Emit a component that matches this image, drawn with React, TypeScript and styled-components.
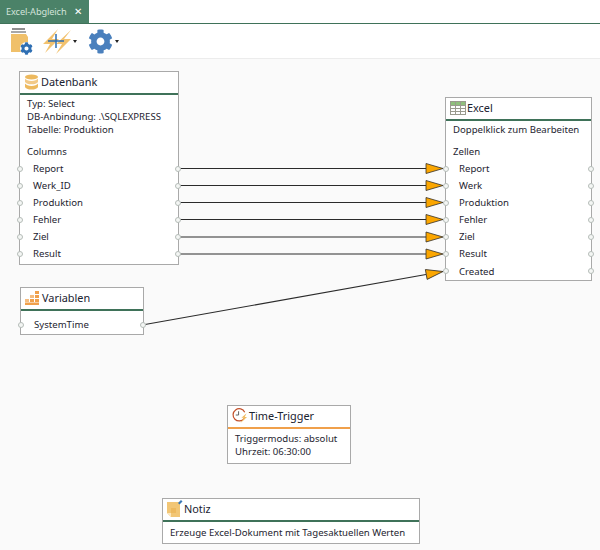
import React from "react";
import styled, { createGlobalStyle } from "styled-components";
import { FaCog } from "react-icons/fa";

const Global = createGlobalStyle`
  html, body { margin: 0; padding: 0; background: #fff; }
  body { font-family: "Noto Sans", "DejaVu Sans", sans-serif; color: #1e2430; }
`;

const Page = styled.div`
  width: 600px;
  height: 550px;
  overflow: hidden;
  display: flex;
  flex-direction: column;
`;

const TabBar = styled.div`
  height: 24px;
  flex: none;
  box-sizing: border-box;
  display: flex;
  border-bottom: 1px solid #3f7259;
`;

const Tab = styled.div`
  width: 89px;
  display: flex;
  align-items: center;
  justify-content: space-between;
  padding: 0 6px;
  box-sizing: border-box;
  background: #4b8268;
  color: #d3e2da;
  font-size: 9.2px;
  letter-spacing: -0.1px;
`;

const Close = styled.span`
  color: #fff;
  font-size: 10px;
  font-family: "Liberation Sans", sans-serif;
  margin-right: 1px;
`;

const Toolbar = styled.div`
  height: 35px;
  flex: none;
  display: flex;
  align-items: center;
  gap: 11px;
  padding: 0 0 0 10px;
  border-bottom: 1px solid #ececec;
  box-sizing: border-box;
`;

const ToolButton = styled.div`
  display: flex;
  align-items: center;
  gap: 2px;
`;

const Caret = styled.span`
  width: 0;
  height: 0;
  border-left: 2.5px solid transparent;
  border-right: 2.5px solid transparent;
  border-top: 3px solid #222;
`;

const Canvas = styled.div`
  position: relative;
  flex: 1;
  background: #fafafa;
`;

const Wires = styled.svg`
  position: absolute;
  left: 0;
  top: 0;
  z-index: 1;
`;

const Node = styled.div<{ $x: number; $y: number; $w: number; $h: number }>`
  position: absolute;
  left: ${(p) => p.$x}px;
  top: ${(p) => p.$y}px;
  width: ${(p) => p.$w}px;
  height: ${(p) => p.$h}px;
  box-sizing: border-box;
  background: #fff;
  border: 1px solid #a9a9a9;
  font-size: 9.6px;
  line-height: 13px;
`;

const NodeHead = styled.div<{ $accent?: string }>`
  height: 23px;
  box-sizing: border-box;
  display: flex;
  align-items: center;
  gap: 1px;
  padding: 0 0 2px 4px;
  font-size: 10.9px;
  color: #1a2230;
  border-bottom: 2px solid ${(p) => p.$accent || "#3f7259"};
`;

const IconSlot = styled.span`
  width: 16px;
  height: 17px;
  flex: none;
  display: flex;
  align-items: center;
`;

const NodeBody = styled.div<{ $top?: number }>`
  padding: ${(p) => p.$top ?? 2}px 0 0 7px;
`;

const Gap = styled.div`
  height: 9px;
`;

const PortList = styled.div<{ $w: number; $top?: number }>`
  position: relative;
  width: ${(p) => p.$w}px;
  margin-top: ${(p) => p.$top ?? 0}px;
`;

const PortRow = styled.div`
  position: relative;
  height: 17.1px;
  line-height: 17px;
  padding-left: 6px;
`;

const PortDot = styled.span<{ $side: "left" | "right" }>`
  position: absolute;
  z-index: 2;
  top: 5.5px;
  ${(p) => (p.$side === "left" ? "left: -10.5px;" : "right: -4px;")}
  width: 4px;
  height: 4px;
  border-radius: 50%;
  background: #f4f6f4;
  border: 1px solid #b5bcb8;
`;

const Ports = ({ names, w, top }: { names: string[]; w: number; top?: number }) => (
  <PortList $w={w} $top={top}>
    {names.map((n) => (
      <PortRow key={n}>
        <PortDot $side="left" />
        {n}
        <PortDot $side="right" />
      </PortRow>
    ))}
  </PortList>
);

const DbIcon = () => (
  <svg width="15" height="16" viewBox="0 0 15 16">
    <ellipse cx="7.5" cy="3" rx="6.5" ry="2.6" fill="#edb95e" />
    <path d="M1 4.6c1 1.7 3.5 2.4 6.5 2.4s5.5-.7 6.5-2.4V8c-1 1.6-3.5 2.3-6.5 2.3S2 9.6 1 8z" fill="#f2c987" />
    <path d="M1 9.6c1 1.6 3.5 2.3 6.5 2.3s5.5-.7 6.5-2.3V13c-.4 1.5-3 2.6-6.5 2.6S1.4 14.5 1 13z" fill="#edb95e" />
  </svg>
);

const GridIcon = () => (
  <svg width="16" height="14" viewBox="0 0 16 14">
    <rect x="0.5" y="0.5" width="15" height="13" fill="#fff" stroke="#9a9a8e" />
    <rect x="1" y="1" width="14" height="3" fill="#8fc07c" />
    <path d="M5.5 1v12M10.5 1v12M1 4.500h14M1 7.500h14M1 10.500h14" stroke="#9a9a8e" fill="none" />
  </svg>
);

const BarsIcon = () => (
  <svg width="15" height="14" viewBox="0 0 15 14" fill="#f0a04b">
    <rect x="10" y="0" width="4" height="3" />
    <rect x="10" y="4" width="4" height="3" />
    <rect x="5" y="4" width="4" height="3" fill="#f5bd80" />
    <rect x="5" y="8" width="4" height="3" />
    <rect x="10" y="8" width="4" height="3" />
    <rect x="0" y="8" width="4" height="3" fill="#f5bd80" />
    <rect x="0" y="11.5" width="14" height="2.500" />
  </svg>
);

const TimerIcon = () => (
  <svg width="17" height="17" viewBox="0 0 17 17">
    <path d="M13 11.500A6.500 6.500 0 1 1 13.500 5" fill="none" stroke="#c4512b" strokeWidth="1.300" />
    <path d="M7 4v4H4" fill="none" stroke="#5b5b5b" strokeWidth="1" />
    <path d="M15.500 6 10 11h2.500L9 16.500l7-6.500h-2.500z" fill="#f1bb5f" />
  </svg>
);

const NoteIcon = () => (
  <svg width="16" height="17" viewBox="0 0 16 17">
    <path d="M0 2h13v15H4l-4-4z" fill="#f2c675" />
    <path d="M0 13h4v4z" fill="#fbe7bf" />
    <path d="M4 8h5v5H4z" fill="#edb95e" />
    <path d="M11 3l3-3 1.500 1.500-3 3z" fill="#3a78b5" />
  </svg>
);

const DbStack = styled.span`
  position: relative;
  display: block;
  width: 22px;
  height: 27px;
`;

const SmallGear = styled(FaCog)`
  position: absolute;
  right: -1px;
  bottom: 0;
  color: #2f6fb3;
  background: #fff;
  border-radius: 50%;
`;

const DbGearIcon = () => (
  <DbStack>
    <svg width="18" height="25" viewBox="0 0 18 25">
      <rect x="2" y="0" width="13" height="2" fill="#8f8f8f" />
      <rect x="1" y="3" width="15" height="2" fill="#a8a8a8" />
      <path d="M1 6h15l2 3v15H1z" fill="#f0c06a" />
    </svg>
    <SmallGear size={13} />
  </DbStack>
);

const BoltPlusIcon = () => (
  <svg width="28" height="27" viewBox="0 0 28 27">
    <path d="M15 1 0 16h7L2 25 16 11H9z" fill="#f2c26f" />
    <path d="M28 2 13 16h6l-6 10 15-15h-7z" fill="#f2c26f" />
    <path d="M13 6v14M5 13h16" stroke="#2f6fb3" strokeWidth="1.500" fill="none" />
  </svg>
);

// connectors, canvas coordinates: left node port to right node port
const links = [
  [179, 109.5, 443, 109.5],
  [179, 126.5, 443, 126.5],
  [179, 143.5, 443, 143.5],
  [179, 160.5, 443, 160.5],
  [179, 178, 443, 178],
  [179, 195, 443, 195],
  [145, 265.5, 443, 212.5],
];

const Arrow = ({ x1, y1, x2, y2 }: { x1: number; y1: number; x2: number; y2: number }) => {
  const deg = (Math.atan2(y2 - y1, x2 - x1) * 180) / Math.PI;
  return (
    <g>
      <line x1={x1} y1={y1} x2={x2 - 17} y2={y2 + (y1 - y2) * (17 / (x2 - x1))} stroke="#2b2b2b" strokeWidth="1.1" />
      <path
        d="M0 0 L-17 -5 L-17 5 Z"
        transform={`translate(${x2} ${y2}) rotate(${deg})`}
        fill="#fba600"
        stroke="#33302a"
        strokeWidth="0.8"
      />
    </g>
  );
};

const dbCols = ["Report", "Werk_ID", "Produktion", "Fehler", "Ziel", "Result"];
const xlCols = ["Report", "Werk", "Produktion", "Fehler", "Ziel", "Result", "Created"];

export default function App() {
  return (
    <Page>
      <Global />
      <TabBar>
        <Tab>
          Excel-Abgleich
          <Close>✕</Close>
        </Tab>
      </TabBar>
      <Toolbar>
        <ToolButton>
          <DbGearIcon />
        </ToolButton>
        <ToolButton>
          <BoltPlusIcon />
          <Caret />
        </ToolButton>
        <ToolButton>
          <FaCog size={25} color="#4a80bd" />
          <Caret />
        </ToolButton>
      </Toolbar>
      <Canvas>
        <Node $x={19} $y={12} $w={160} $h={194}>
          <NodeHead>
            <IconSlot>
              <DbIcon />
            </IconSlot>
            Datenbank
          </NodeHead>
          <NodeBody>
            Typ: Select
            <br />
            DB-Anbindung: .\SQLEXPRESS
            <br />
            Tabelle: Produktion
            <Gap />
            Columns
            <Ports names={dbCols} w={150} top={2} />
          </NodeBody>
        </Node>

        <Node $x={445} $y={38} $w={147} $h={184}>
          <NodeHead>
            <IconSlot>
              <GridIcon />
            </IconSlot>
            Excel
          </NodeHead>
          <NodeBody>
            Doppelklick zum Bearbeiten
            <Gap />
            Zellen
            <Ports names={xlCols} w={137} top={2} />
          </NodeBody>
        </Node>

        <Node $x={20} $y={228} $w={124} $h={48}>
          <NodeHead>
            <IconSlot>
              <BarsIcon />
            </IconSlot>
            Variablen
          </NodeHead>
          <NodeBody $top={5}>
            <Ports names={["SystemTime"]} w={114} />
          </NodeBody>
        </Node>

        <Node $x={227} $y={346} $w={124} $h={59}>
          <NodeHead $accent="#f0a04b">
            <IconSlot>
              <TimerIcon />
            </IconSlot>
            Time-Trigger
          </NodeHead>
          <NodeBody $top={3}>
            Triggermodus: absolut
            <br />
            Uhrzeit: 06:30:00
          </NodeBody>
        </Node>

        <Node $x={162} $y={439} $w={258} $h={46}>
          <NodeHead>
            <IconSlot>
              <NoteIcon />
            </IconSlot>
            Notiz
          </NodeHead>
          <NodeBody $top={4}>Erzeuge Excel-Dokument mit Tagesaktuellen Werten</NodeBody>
        </Node>

        <Wires width="600" height="491" viewBox="0 0 600 491">
          {links.map(([x1, y1, x2, y2]) => (
            <Arrow key={`${y1}-${y2}`} x1={x1} y1={y1} x2={x2} y2={y2} />
          ))}
        </Wires>
      </Canvas>
    </Page>
  );
}
